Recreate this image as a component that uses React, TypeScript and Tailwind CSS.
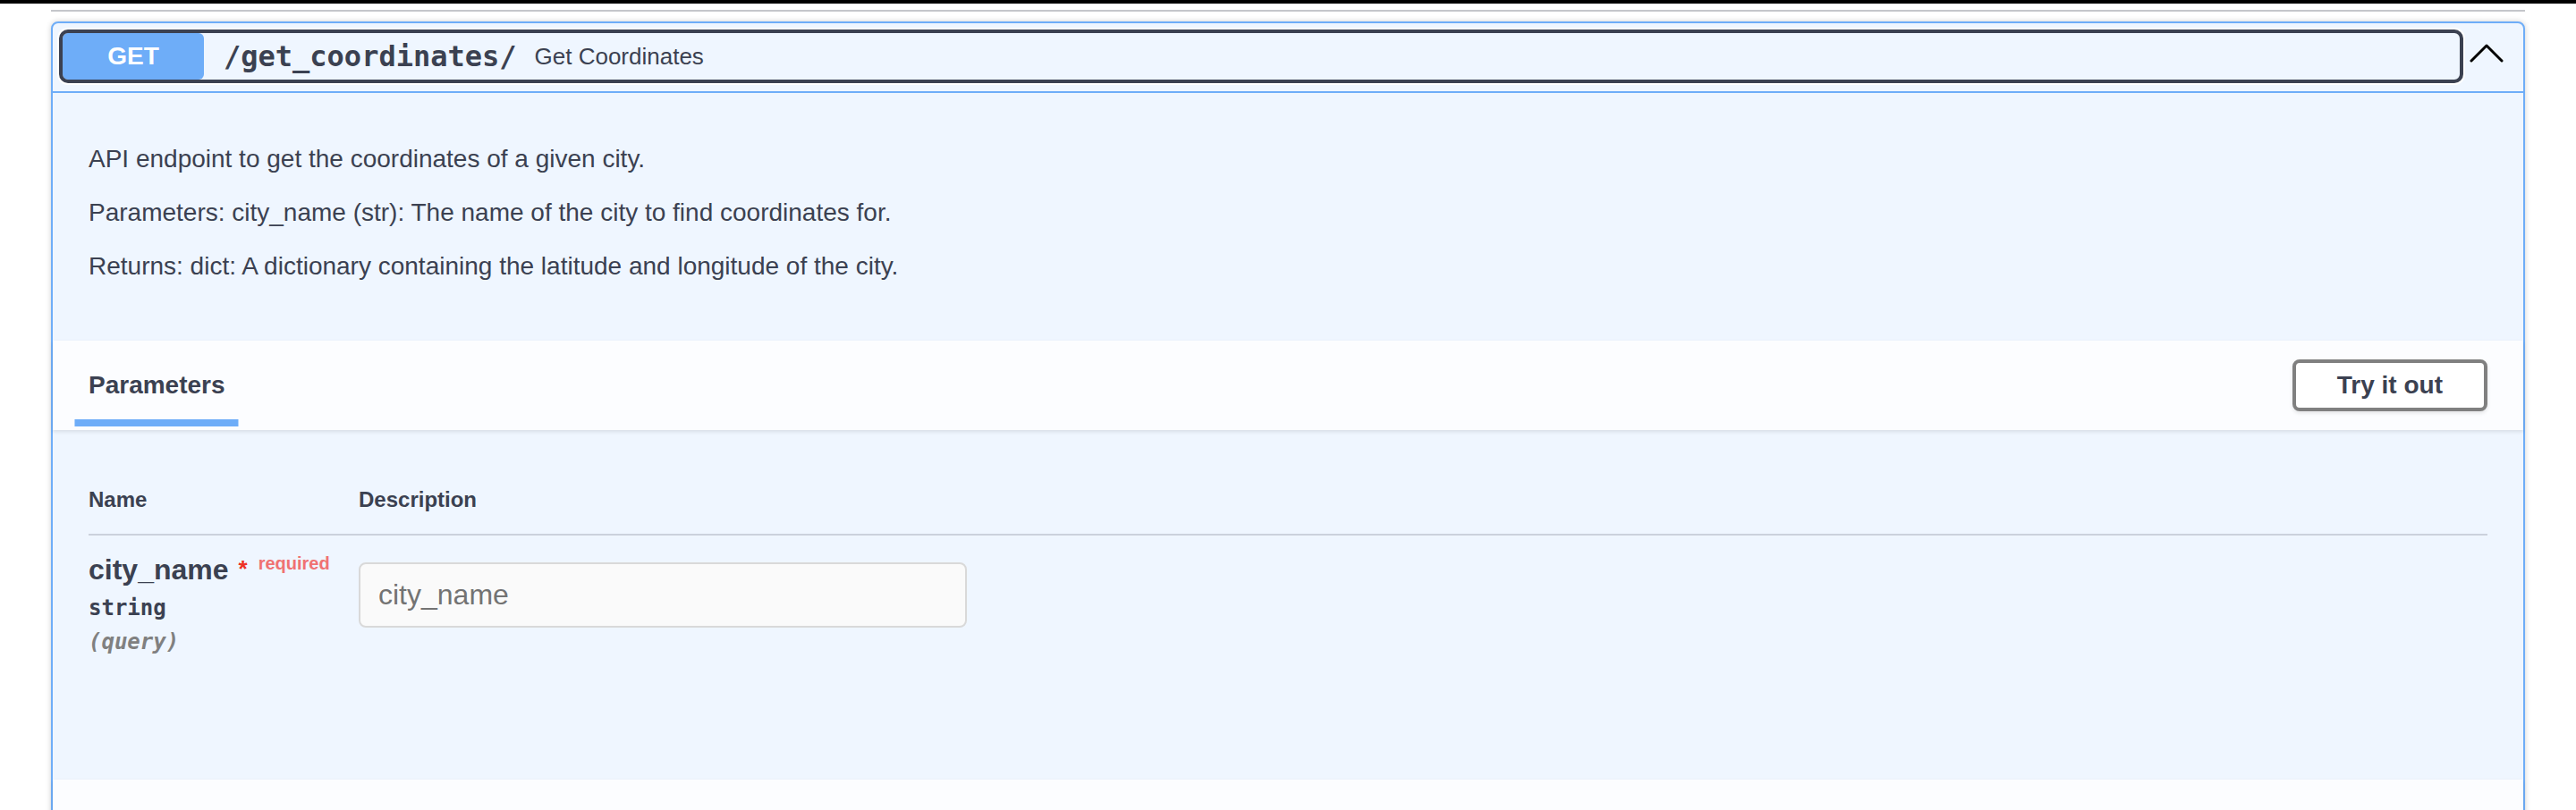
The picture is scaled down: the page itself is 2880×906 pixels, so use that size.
import React from 'react'

const lines = [
  'API endpoint to get the coordinates of a given city.',
  'Parameters: city_name (str): The name of the city to find coordinates for.',
  'Returns: dict: A dictionary containing the latitude and longitude of the city.',
]

function ChevronUp() {
  return (
    <svg width="40" height="40" viewBox="0 0 40 40" fill="none">
      <polyline points="3,25 20,8 37,25" stroke="#000" strokeWidth="3" strokeLinecap="round" strokeLinejoin="round" />
    </svg>
  )
}

export default function App() {
  return (
    <div className="min-h-screen bg-white font-['Liberation_Sans',Arial,sans-serif] text-[#3b4151]">
      <div className="h-[4px] bg-black" />
      <div className="mx-[57px] mt-[7px] h-[2px] bg-[#c4c6cb]" />

      {/* GET operation block */}
      <div className="mx-[57px] mt-[11px] rounded-[8px] border-2 border-[#6eadf8] bg-[#eff6ff] shadow-[0_0_6px_rgba(0,0,0,0.19)]">
        {/* Summary */}
        <div className="flex items-center border-b-2 border-[#6eadf8] pt-[11px] pb-[13px] pl-[11px] pr-[11px]">
          <button className="flex h-[52px] flex-1 items-center rounded-[6px] text-left outline-4 outline-[#3b4151] shadow-[0_0_0_6px_#ffffff]">
            <span className="flex h-[52px] w-[158px] shrink-0 items-center justify-center rounded-[6px] bg-[#6eadf8] text-[28px] font-bold text-white">
              GET
            </span>
            <span className="pl-[22px] pr-[20px] font-['DejaVu_Sans_Mono',monospace] text-[32px] font-bold">
              /get_coordinates/
            </span>
            <span className="text-[26px]">Get Coordinates</span>
          </button>
          <button className="flex w-[60px] justify-center">
            <ChevronUp />
          </button>
        </div>

        {/* Description */}
        <div className="mb-[9px] px-[40px] py-[30px] text-[28px] leading-[32px]">
          {lines.map((l, i) => (
            <p key={i} className="my-[28px]">{l}</p>
          ))}
        </div>

        {/* Parameters header */}
        <div className="relative flex min-h-[100px] items-center bg-white/80 px-[40px] shadow-[0_2px_4px_rgba(0,0,0,0.1)]">
          <div className="relative">
            <h4 className="text-[28px] font-bold leading-[32px]">Parameters</h4>
            <span className="absolute -bottom-[30px] left-1/2 h-[8px] w-[120%] -translate-x-1/2 bg-[#6eadf8]" />
          </div>
          <button className="ml-auto rounded-[8px] border-4 border-[#808080] bg-white px-[46px] py-[9px] text-[28px] font-bold leading-[32px] shadow-[0_2px_4px_rgba(0,0,0,0.1)]">
            Try it out
          </button>
        </div>

        {/* Parameters table */}
        <div className="h-[391px] p-[40px]">
          <table className="w-full">
            <thead>
              <tr>
                <th className="w-[302px] border-b-2 border-[rgba(59,65,81,0.2)] py-[24px] text-left text-[24px] font-bold leading-[28px]">
                  Name
                </th>
                <th className="border-b-2 border-[rgba(59,65,81,0.2)] py-[24px] text-left text-[24px] font-bold leading-[28px]">
                  Description
                </th>
              </tr>
            </thead>
            <tbody>
              <tr>
                <td className="pt-[20px] align-top">
                  <div className="flex items-baseline">
                    <span className="text-[32px] font-bold leading-[37px]">city_name</span>
                    <span className="relative -top-[3px] ml-[11px] text-[26px] font-bold leading-none text-[#ee3124]">*</span>
                    <span className="relative -top-[11px] ml-[12px] text-[20px] font-bold leading-none text-[#f07272]">required</span>
                  </div>
                  <div className="py-[10px] font-['DejaVu_Sans_Mono',monospace] text-[24px] font-semibold leading-[28px]">
                    string
                  </div>
                  <div className="font-['DejaVu_Sans_Mono',monospace] text-[24px] font-semibold italic leading-[28px] text-[#808080]">
                    (query)
                  </div>
                </td>
                <td className="pt-[20px] align-top">
                  <input
                    type="text"
                    placeholder="city_name"
                    className="my-[10px] w-full max-w-[680px] rounded-[8px] border-2 border-[#d9d9d9] bg-[#fafafa] px-[20px] py-[16px] text-[32px] leading-[37px] outline-none placeholder:text-[#737373]"
                  />
                </td>
              </tr>
            </tbody>
          </table>
        </div>

        {/* Next section header (below the fold) */}
        <div className="relative h-[100px] bg-white/80 shadow-[0_2px_4px_rgba(0,0,0,0.1)]" />
      </div>
    </div>
  )
}
